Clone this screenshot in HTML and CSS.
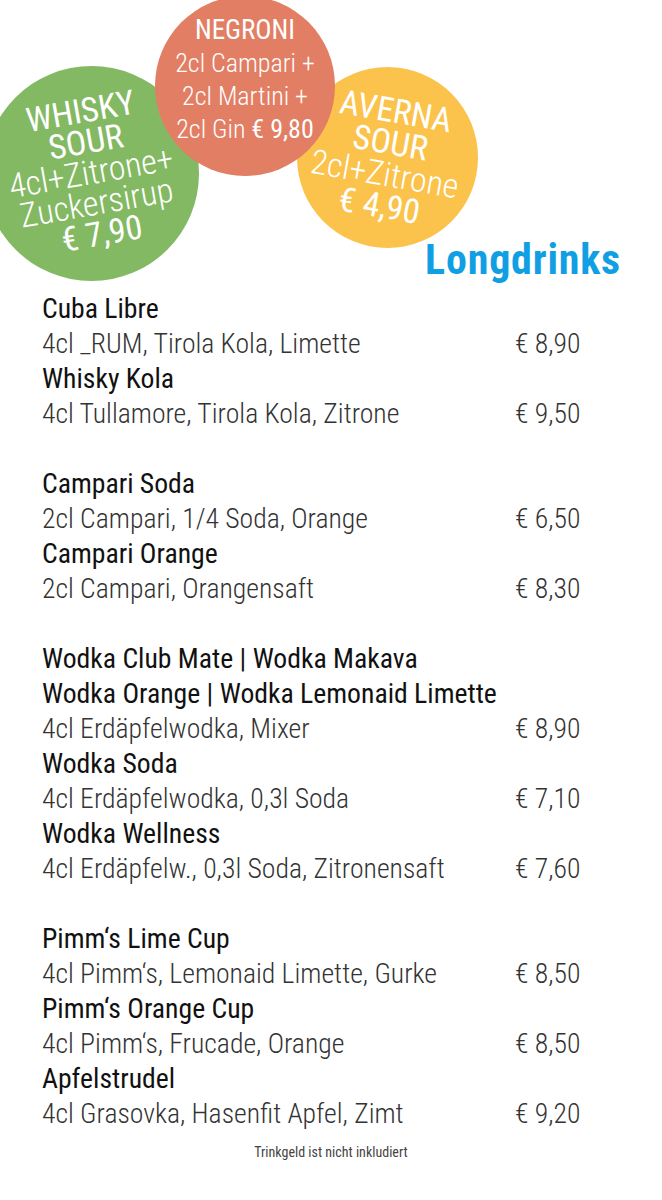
FILE: index.html
```html
<!DOCTYPE html>
<html lang="de">
<head>
<meta charset="utf-8">
<title>Longdrinks</title>
<link rel="stylesheet" href="styles.css">
</head>
<body>
<div class="page">
  <header class="header">
    <div class="bubble bubble-green">
      <div class="bubble-text tilt-left">
        <div class="strong">WHISKY</div>
        <div class="strong">SOUR</div>
        <div>4cl+Zitrone+</div>
        <div>Zuckersirup</div>
        <div class="strong">€ 7,90</div>
      </div>
    </div>
    <div class="bubble bubble-yellow">
      <div class="bubble-text tilt-right">
        <div class="strong">AVERNA</div>
        <div class="strong">SOUR</div>
        <div>2cl+Zitrone</div>
        <div class="strong">€ 4,90</div>
      </div>
    </div>
    <div class="bubble bubble-red">
      <div class="bubble-text">
        <div class="strong head">NEGRONI</div>
        <div>2cl Campari +</div>
        <div>2cl Martini +</div>
        <div>2cl Gin <span class="strong">€ 9,80</span></div>
      </div>
    </div>
    <h1 class="title">Longdrinks</h1>
  </header>

  <main class="menu">
    <section class="group">
      <div class="name">Cuba Libre</div>
      <div class="row"><span class="desc">4cl _RUM, Tirola Kola, Limette</span><span class="price">€ 8,90</span></div>
      <div class="name">Whisky Kola</div>
      <div class="row"><span class="desc">4cl Tullamore, Tirola Kola, Zitrone</span><span class="price">€ 9,50</span></div>
    </section>
    <section class="group">
      <div class="name">Campari Soda</div>
      <div class="row"><span class="desc">2cl Campari, 1/4 Soda, Orange</span><span class="price">€ 6,50</span></div>
      <div class="name">Campari Orange</div>
      <div class="row"><span class="desc">2cl Campari, Orangensaft</span><span class="price">€ 8,30</span></div>
    </section>
    <section class="group">
      <div class="name">Wodka Club Mate | Wodka Makava</div>
      <div class="name">Wodka Orange | Wodka Lemonaid Limette</div>
      <div class="row"><span class="desc">4cl Erdäpfelwodka, Mixer</span><span class="price">€ 8,90</span></div>
      <div class="name">Wodka Soda</div>
      <div class="row"><span class="desc">4cl Erdäpfelwodka, 0,3l Soda</span><span class="price">€ 7,10</span></div>
      <div class="name">Wodka Wellness</div>
      <div class="row"><span class="desc">4cl Erdäpfelw., 0,3l Soda, Zitronensaft</span><span class="price">€ 7,60</span></div>
    </section>
    <section class="group">
      <div class="name">Pimm‘s Lime Cup</div>
      <div class="row"><span class="desc">4cl Pimm‘s, Lemonaid Limette, Gurke</span><span class="price">€ 8,50</span></div>
      <div class="name">Pimm‘s Orange Cup</div>
      <div class="row"><span class="desc">4cl Pimm‘s, Frucade, Orange</span><span class="price">€ 8,50</span></div>
      <div class="name">Apfelstrudel</div>
      <div class="row"><span class="desc">4cl Grasovka, Hasenfit Apfel, Zimt</span><span class="price">€ 9,20</span></div>
    </section>
  </main>

  <footer class="footer">Trinkgeld ist nicht inkludiert</footer>
</div>
</body>
</html>
```

FILE: styles.css
```css
* { box-sizing: border-box; }
html, body { margin: 0; padding: 0; background: #fff; }
body {
  font-family: Roboto, "Liberation Sans", sans-serif;
  font-stretch: 87.5%;
  color: #111;
  width: 662px;
  overflow: hidden;
}
.page { width: 662px; }

.header {
  position: relative;
  height: 291px;
  display: flex;
  flex-direction: column;
  justify-content: flex-end;
  align-items: flex-end;
  padding: 0 42px 9px 0;
}
.bubble {
  position: absolute;
  border-radius: 50%;
  display: flex;
  align-items: center;
  justify-content: center;
  color: #fff;
  text-align: center;
}
.bubble-green {
  left: -16px; top: 66px; width: 215px; height: 215px;
  background: #84b964;
}
.bubble-yellow {
  left: 297px; top: 67px; width: 181px; height: 181px;
  background: #fbc34c;
}
.bubble-red {
  left: 155px; top: -4px; width: 180px; height: 180px;
  background: #e17e63;
}
.bubble-text {
  font-weight: 300;
  font-stretch: 75%;
  font-size: 34px;
  line-height: 31px;
  white-space: nowrap;
}
.bubble-text .strong { font-weight: 400; }
.bubble-yellow .bubble-text { line-height: 32px; }
.bubble-red .bubble-text {
  font-size: 26px;
  line-height: 33px;
  transform: translateY(-6px);
}
.bubble-red .head { font-size: 27px; }
.tilt-left { transform: translateY(-1px) rotate(-10deg); }
.tilt-right { transform: rotate(10deg); }

.title {
  position: relative;
  margin: 0 -1px 0 0;
  font-size: 42px;
  font-stretch: 87.5%;
  letter-spacing: 0.8px;
  line-height: 44px;
  font-weight: 700;
  color: #119fe3;
}

.menu { padding: 0 42px; }
.group { margin-bottom: 35px; }
.group:last-child { margin-bottom: 0; }
.name, .row {
  font-size: 27.7px;
  line-height: 35px;
  height: 35px;
  white-space: nowrap;
}
.name { font-weight: 400; color: #111; }
.row { display: flex; color: #333; font-weight: 300; }
.desc { flex: 1; }
.price { width: 105px; }

.footer {
  text-align: center;
  font-size: 14px;
  line-height: 18px;
  color: #444;
  font-weight: 400;
  padding-top: 12px;
}
```
